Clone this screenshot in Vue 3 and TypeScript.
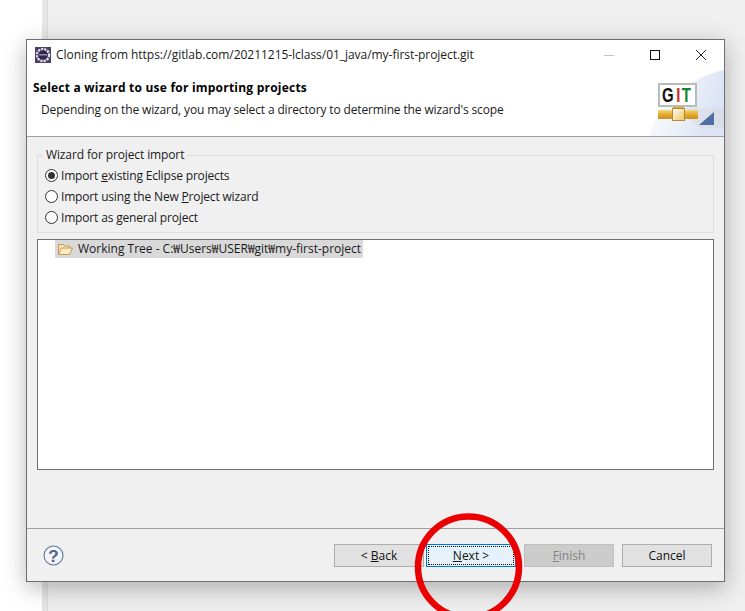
<script setup lang="ts">
const options = [
  { before: 'Import ', key: 'e', after: 'xisting Eclipse projects', checked: true },
  { before: 'Import using the New ', key: 'P', after: 'roject wizard', checked: false },
  { before: 'Import as ', key: 'g', after: 'eneral project', checked: false },
]
</script>

<template>
  <div class="page">
    <div class="backdrop">
      <div class="side"></div>
      <div class="strip"></div>
    </div>

    <div class="dialog">
      <div class="titlebar">
        <svg class="app-icon" width="16" height="16" viewBox="0 0 16 16">
          <rect width="16" height="16" fill="#4b3f6b" />
          <circle cx="8" cy="8" r="6" fill="none" stroke="#e4e4e4" stroke-width="2.4" stroke-dasharray="2.2 1" />
          <circle cx="8" cy="8" r="4.6" fill="#2c2850" />
          <rect x="4" y="7" width="8" height="1.6" fill="#8f89a8" />
        </svg>
        <span class="title">Cloning from https://gitlab.com/20211215-lclass/01_java/my-first-project.git</span>
        <div class="controls">
          <svg width="12" height="12" viewBox="0 0 12 12"><path d="M1 6.5h10" stroke="#c4c4c4" stroke-width="1" /></svg>
          <svg width="12" height="12" viewBox="0 0 12 12"><rect x="1.5" y="1.5" width="9" height="9" fill="none" stroke="#111" stroke-width="1" /></svg>
          <svg width="12" height="12" viewBox="0 0 12 12"><path d="M1 1l10 10M11 1L1 11" stroke="#222" stroke-width="1" /></svg>
        </div>
      </div>

      <div class="banner">
        <div class="banner-text">
          <h1>Select a wizard to use for importing projects</h1>
          <p>Depending on the wizard, you may select a directory to determine the wizard's scope</p>
        </div>
        <svg class="git-logo" width="76" height="66" viewBox="0 0 76 66">
          <defs>
            <linearGradient id="wash" x1="0" y1="0" x2="1" y2="0.3">
              <stop offset="0" stop-color="#ffffff" />
              <stop offset="1" stop-color="#dbe3f4" />
            </linearGradient>
            <linearGradient id="pipe" x1="0" y1="0" x2="0" y2="1">
              <stop offset="0" stop-color="#f5d67c" />
              <stop offset="0.5" stop-color="#e3a92a" />
              <stop offset="1" stop-color="#c99222" />
            </linearGradient>
            <linearGradient id="joint" x1="0" y1="0" x2="1" y2="1">
              <stop offset="0" stop-color="#ffffff" />
              <stop offset="1" stop-color="#eec25a" />
            </linearGradient>
          </defs>
          <path d="M2 66C8 34 40 8 76 0V66Z" fill="url(#wash)" />
          <path d="M30 38H76V58H52Z" fill="#d9d9de" opacity="0.5" />
          <rect x="11" y="14" width="37" height="22" fill="#fff" stroke="#b4bdb8" stroke-width="2" />
          <text class="git-word" transform="translate(14 32) scale(1 1.33)"><tspan class="git-g">G</tspan><tspan class="git-i" dx="2.500">I</tspan><tspan class="git-t" dx="1.500">T</tspan></text>
          <rect x="25" y="37" width="11" height="4" fill="#e3a92a" />
          <rect x="10" y="40" width="40" height="9" fill="url(#pipe)" />
          <rect x="24.500" y="38.500" width="12" height="12" fill="url(#joint)" stroke="#b98a2a" />
          <path d="M51 55L66 42V55Z" fill="#4f6ea6" />
        </svg>
      </div>

      <div class="body">
        <fieldset class="group">
          <legend>Wizard for project import</legend>
          <label v-for="opt in options" :key="opt.key" class="radio-row">
            <span class="radio" :class="{ on: opt.checked }"></span>
            <span>{{ opt.before }}<u>{{ opt.key }}</u>{{ opt.after }}</span>
          </label>
        </fieldset>

        <div class="tree">
          <div class="tree-row">
            <svg width="17" height="14" viewBox="0 0 17 14">
              <path d="M1.500 12.500V2.500h5l1 1.500h5v2" fill="#f6e3b4" stroke="#c59a4e" />
              <path d="M1.500 12.500l3-6.500h11l-3 6.500z" fill="#fbeec9" stroke="#c59a4e" />
            </svg>
            <span class="tree-label">Working Tree - C:₩Users₩USER₩git₩my-first-project</span>
          </div>
        </div>
      </div>

      <div class="footer">
        <svg class="help" width="21" height="21" viewBox="0 0 21 21">
          <circle cx="10.500" cy="10.500" r="9.500" fill="#f4f5f8" stroke="#5f739b" stroke-width="1.100" />
          <text x="10.500" y="16.500" class="help-mark">?</text>
        </svg>
        <div class="buttons">
          <div class="nav">
            <button class="btn">&lt; <u>B</u>ack</button>
            <button class="btn primary"><span class="focus"><u>N</u>ext &gt;</span></button>
          </div>
          <button class="btn disabled"><u>F</u>inish</button>
          <button class="btn">Cancel</button>
        </div>
      </div>
    </div>

    <svg class="ring" width="113" height="100" viewBox="0 0 113 100">
      <ellipse cx="56.500" cy="56" rx="50.500" ry="50.500" fill="none" stroke="#ea0000" stroke-width="6.500" />
    </svg>
  </div>
</template>

<style scoped>
.page {
  position: relative;
  width: 745px;
  height: 611px;
  overflow: hidden;
  background: #efefef;
  font-family: "Open Sans", "Noto Sans CJK KR", sans-serif;
  font-size: 12px;
  color: #1a1a1a;
  padding: 39px 0 0 26px;
  box-sizing: border-box;
}

.backdrop {
  position: absolute;
  inset: 0;
  display: flex;
}

.side {
  width: 42px;
  background: #fff;
}

.strip {
  width: 5px;
  background: #e6e6e6;
  border-right: 1px solid #dcdcdc;
}

.dialog {
  position: relative;
  width: 699px;
  height: 543px;
  box-sizing: border-box;
  border: 1px solid #6f6f6f;
  background: #f0f0f0;
  box-shadow: 0 6px 22px rgba(0, 0, 0, 0.28);
  display: flex;
  flex-direction: column;
}

.titlebar {
  height: 30px;
  flex: none;
  background: #fff;
  display: flex;
  align-items: center;
  padding-left: 8px;
}

.app-icon {
  flex: none;
}

.title {
  margin-left: 5px;
  padding-bottom: 2px;
  white-space: nowrap;
  letter-spacing: -0.04px;
}

.controls {
  margin-left: auto;
  display: flex;
  gap: 34px;
  padding-right: 17px;
}

.banner {
  position: relative;
  height: 66px;
  flex: none;
  background: #fff;
  border-bottom: 1px solid #a0a0a0;
}

.banner-text {
  padding: 9px 0 0 6px;
}

.banner h1 {
  margin: 0;
  font-size: 12px;
  font-weight: 700;
  color: #000;
  line-height: 17px;
  letter-spacing: 0.22px;
}

.banner p {
  margin: 6px 0 0 8px;
  line-height: 16px;
  letter-spacing: -0.14px;
}

.git-logo {
  position: absolute;
  right: 0;
  top: 0;
}

.git-word {
  font-family: "Liberation Sans", sans-serif;
  font-size: 15px;
  font-weight: 700;
}

.git-g { fill: #111; }
.git-i { fill: #d42a2a; }
.git-t { fill: #13852e; }

.body {
  flex: 1;
  padding: 11px 10px 0;
  display: flex;
  flex-direction: column;
}

.group {
  margin: 0;
  padding: 3px 0 0 7px;
  height: 85px;
  box-sizing: border-box;
  border: 1px solid #dcdcdc;
  min-width: 0;
  flex: none;
}

.group legend {
  padding: 0 3px 0 3px;
  margin-left: -2px;
  line-height: 14px;
  letter-spacing: -0.12px;
}

.radio-row {
  display: flex;
  align-items: center;
  gap: 3px;
  height: 21px;
  letter-spacing: -0.17px;
}

.radio {
  width: 11px;
  height: 11px;
  border: 1px solid #333;
  border-radius: 50%;
  background: #fff;
  position: relative;
  flex: none;
}

.radio.on::after {
  content: "";
  position: absolute;
  inset: 2px;
  border-radius: 50%;
  background: #333;
}

.tree {
  margin-top: 6px;
  height: 231px;
  flex: none;
  box-sizing: border-box;
  border: 1px solid #6f6f6f;
  background: #fff;
  padding: 0 0 0 17px;
}

.tree-row {
  display: inline-flex;
  align-items: center;
  gap: 4px;
  height: 18px;
  background: #d9d9d9;
  padding: 0 2px;
  white-space: nowrap;
}

.tree-label {
  padding-bottom: 2px;
}

.footer {
  height: 53px;
  flex: none;
  box-sizing: border-box;
  border-top: 1px solid #a0a0a0;
  display: flex;
  align-items: center;
  padding: 1px 12px 0 16px;
}

.buttons {
  margin-left: auto;
  display: flex;
  gap: 8px;
}

.nav {
  display: flex;
  gap: 2px;
}

.btn {
  width: 90px;
  height: 23px;
  padding: 0;
  box-sizing: border-box;
  border: 1px solid #adadad;
  background: #e1e1e1;
  font: inherit;
  color: #111;
}

.primary {
  border-color: #0078d7;
  background: #e5f1fb;
  padding: 1px;
}

.focus {
  display: flex;
  height: 100%;
  align-items: center;
  justify-content: center;
  border: 1px dotted #111;
  box-sizing: border-box;
}

.disabled {
  background: #cccccc;
  border-color: #bfbfbf;
  color: #838383;
}

.help {
  flex: none;
}

.help-mark {
  font-family: "Liberation Sans", sans-serif;
  font-size: 17px;
  font-weight: 700;
  fill: #4f6288;
  text-anchor: middle;
}

.ring {
  position: absolute;
  left: 412px;
  top: 511px;
}
</style>
